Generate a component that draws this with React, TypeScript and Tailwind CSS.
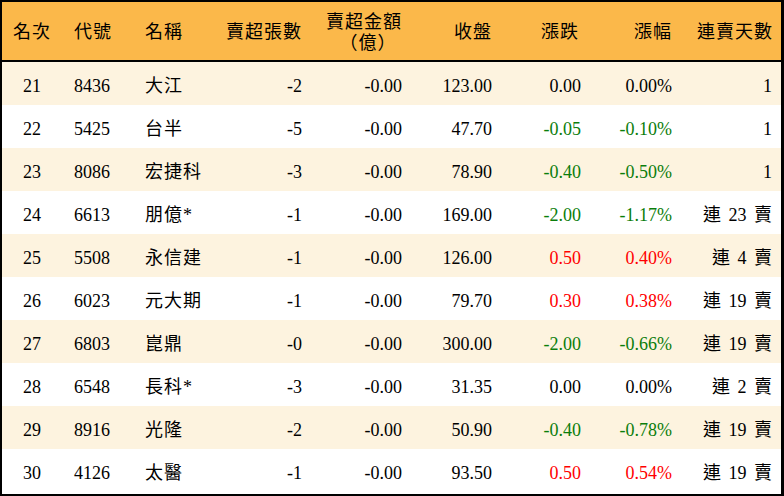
const rows = [
  { rank: 21, code: "8436", name: "大江", lots: "-2", amt: "-0.00", close: "123.00", chg: "0.00", pct: "0.00%", days: "1" },
  { rank: 22, code: "5425", name: "台半", lots: "-5", amt: "-0.00", close: "47.70", chg: "-0.05", pct: "-0.10%", days: "1" },
  { rank: 23, code: "8086", name: "宏捷科", lots: "-3", amt: "-0.00", close: "78.90", chg: "-0.40", pct: "-0.50%", days: "1" },
  { rank: 24, code: "6613", name: "朋億*", lots: "-1", amt: "-0.00", close: "169.00", chg: "-2.00", pct: "-1.17%", days: "連 23 賣" },
  { rank: 25, code: "5508", name: "永信建", lots: "-1", amt: "-0.00", close: "126.00", chg: "0.50", pct: "0.40%", days: "連 4 賣" },
  { rank: 26, code: "6023", name: "元大期", lots: "-1", amt: "-0.00", close: "79.70", chg: "0.30", pct: "0.38%", days: "連 19 賣" },
  { rank: 27, code: "6803", name: "崑鼎", lots: "-0", amt: "-0.00", close: "300.00", chg: "-2.00", pct: "-0.66%", days: "連 19 賣" },
  { rank: 28, code: "6548", name: "長科*", lots: "-3", amt: "-0.00", close: "31.35", chg: "0.00", pct: "0.00%", days: "連 2 賣" },
  { rank: 29, code: "8916", name: "光隆", lots: "-2", amt: "-0.00", close: "50.90", chg: "-0.40", pct: "-0.78%", days: "連 19 賣" },
  { rank: 30, code: "4126", name: "太醫", lots: "-1", amt: "-0.00", close: "93.50", chg: "0.50", pct: "0.54%", days: "連 19 賣" },
];

const cols = "grid grid-cols-[60px_72px_76px_102px_100px_90px_89px_91px_99px]";

function tone(v: string) {
  if (v.startsWith("-")) return "text-[#0b7d0b]";
  if (parseFloat(v) > 0) return "text-[#ff0000]";
  return "text-black";
}

export default function App() {
  return (
    <div className="w-[784px] h-[496px] bg-white font-['Liberation_Serif','Noto_Sans_CJK_TC',serif] text-[18px] text-black">
      <div className="border-2 border-black border-r-[3px] h-full flex flex-col">
        <div className={`${cols} h-[60px] bg-[#fbb84a] border-b-2 border-black items-center tracking-[1px] pt-[3px]`}>
          <div className="text-center">名次</div>
          <div className="pl-3">代號</div>
          <div className="pl-[11px]">名稱</div>
          <div className="text-right pr-[10px]">賣超張數</div>
          <div className="flex flex-col items-center leading-[21px] pl-1">
            <span>賣超金額</span>
            <span className="pl-2">（億）</span>
          </div>
          <div className="text-right pr-[10px]">收盤</div>
          <div className="text-right pr-[12px]">漲跌</div>
          <div className="text-right pr-[10px]">漲幅</div>
          <div className="text-right pr-[8px]">連賣天數</div>
        </div>
        {rows.map((r, i) => (
          <div key={r.rank} className={`${cols} h-[43px] items-center pt-[5px] ${i % 2 === 0 ? "bg-[#fdf3df]" : "bg-white"}`}>
            <div className="text-center">{r.rank}</div>
            <div className="pl-3">{r.code}</div>
            <div className="pl-[11px] tracking-[1px]">{r.name}</div>
            <div className="text-right pr-[10px]">{r.lots}</div>
            <div className="text-right pr-[10px]">{r.amt}</div>
            <div className="text-right pr-[10px]">{r.close}</div>
            <div className={`text-right pr-[10px] ${tone(r.chg)}`}>{r.chg}</div>
            <div className={`text-right pr-[10px] ${tone(r.pct)}`}>{r.pct}</div>
            <div className="text-right pr-[9px] whitespace-pre [word-spacing:3px]">{r.days}</div>
          </div>
        ))}
      </div>
    </div>
  );
}
